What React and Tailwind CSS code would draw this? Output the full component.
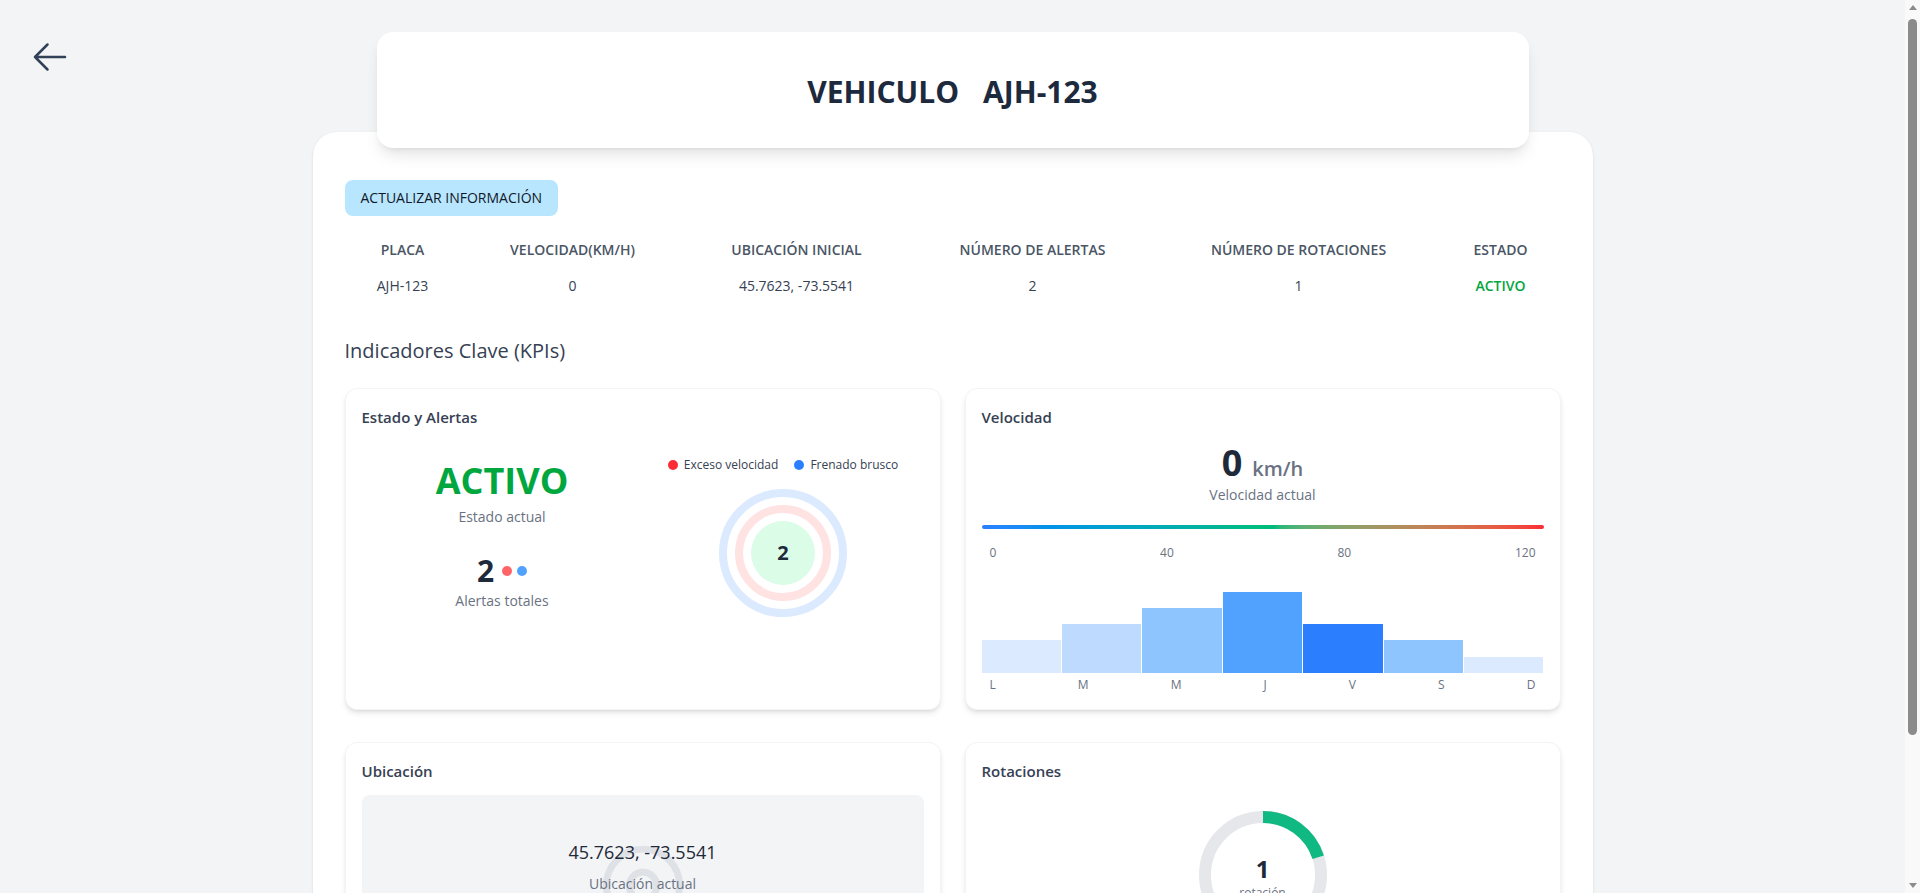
import { MapPin } from "lucide-react";

const columns = [
  { label: "Placa", width: "w-[116px]" },
  { label: "Velocidad(km/h)", width: "w-[224px]" },
  { label: "Ubicación inicial", width: "w-[224px]" },
  { label: "Número de alertas", width: "w-[248px]" },
  { label: "Número de rotaciones", width: "w-[284px]" },
  { label: "Estado", width: "w-[120px]" },
];

const days = [
  { d: "L", h: "h-[33px]", c: "bg-blue-100" },
  { d: "M", h: "h-[49px]", c: "bg-blue-200" },
  { d: "M", h: "h-[65px]", c: "bg-blue-300" },
  { d: "J", h: "h-[81px]", c: "bg-blue-400" },
  { d: "V", h: "h-[49px]", c: "bg-blue-500" },
  { d: "S", h: "h-[33px]", c: "bg-blue-300" },
  { d: "D", h: "h-[16px]", c: "bg-blue-100" },
];

function Card({ title, children }) {
  return (
    <div className="bg-white border border-gray-100 rounded-xl shadow-md p-4">
      <h3 className="text-[15px] leading-6 font-semibold text-gray-700">{title}</h3>
      {children}
    </div>
  );
}

// window scrollbar as it shows in the capture
function ScrollBar() {
  return (
    <div className="fixed right-0 top-0 h-screen w-[15px] bg-[#f9f9f9] flex flex-col items-center">
      <div className="mt-[5px] w-0 h-0 border-x-[4px] border-x-transparent border-b-[5px] border-b-[#8b8b8b]" />
      <div className="mt-[9px] w-[9px] h-[716px] rounded-full bg-[#8b8b8b]" />
      <div className="mt-auto mb-[5px] w-0 h-0 border-x-[4px] border-x-transparent border-t-[5px] border-t-[#8b8b8b]" />
    </div>
  );
}

export default function App() {
  const rotations = 1;
  const maxRotations = 5;
  const r = 58;
  const circ = 2 * Math.PI * r;

  return (
    <div className="min-h-screen bg-gray-100 font-['Open_Sans','Noto_Sans',sans-serif]">
      <div className="relative mr-[15px] pt-8 pb-6">
        {/* back */}
        <button className="absolute left-[30px] top-[37px] w-10 h-10 text-slate-700">
          <svg viewBox="0 0 24 24" fill="none" stroke="currentColor" strokeWidth="1.5" className="w-10 h-10">
            <path strokeLinecap="round" strokeLinejoin="round" d="M10.5 19.5 3 12m0 0 7.5-7.5M3 12h18" />
          </svg>
        </button>

        {/* HEADER */}
        <div className="relative z-10 max-w-6xl mx-auto bg-white rounded-2xl shadow-lg pt-[42px] pb-[38px]">
          <h1 className="flex justify-center gap-6 text-3xl font-bold text-slate-800">
            <span>VEHICULO</span>
            <span>AJH-123</span>
          </h1>
        </div>

        {/* MAIN */}
        <div className="max-w-7xl mx-auto -mt-4 bg-white rounded-3xl shadow-sm px-8 pt-12 pb-8">
          <button className="px-4 py-2 bg-sky-200 rounded-lg text-sm text-gray-900 uppercase">
            Actualizar información
          </button>

          <table className="mt-4 w-full table-fixed">
            <thead>
              <tr>
                {columns.map((c) => (
                  <th
                    key={c.label}
                    className={`${c.width} py-2 text-sm font-semibold uppercase text-gray-600 text-center`}
                  >
                    {c.label}
                  </th>
                ))}
              </tr>
            </thead>
            <tbody>
              <tr className="text-sm text-gray-700 text-center">
                <td className="py-2">AJH-123</td>
                <td className="py-2">0</td>
                <td className="py-2">45.7623, -73.5541</td>
                <td className="py-2">2</td>
                <td className="py-2">1</td>
                <td className="py-2 font-semibold text-green-600">ACTIVO</td>
              </tr>
            </tbody>
          </table>

          <h2 className="mt-[33px] text-xl leading-7 font-medium text-gray-700">Indicadores Clave (KPIs)</h2>

          <div className="mt-[23px] grid grid-cols-2 gap-x-6 gap-y-8">
            {/* ESTADO Y ALERTAS */}
            <Card title="Estado y Alertas">
              <div className="mt-7 grid grid-cols-2">
                <div className="pt-1 flex flex-col items-center">
                  <div className="text-4xl font-bold text-green-600">ACTIVO</div>
                  <div className="mt-1.5 text-sm text-gray-500">Estado actual</div>
                  <div className="mt-[26px] flex items-center gap-2">
                    <span className="text-3xl font-bold text-gray-800">2</span>
                    <span className="flex gap-[5px]">
                      <span className="w-2.5 h-2.5 rounded-full bg-red-400" />
                      <span className="w-2.5 h-2.5 rounded-full bg-blue-400" />
                    </span>
                  </div>
                  <div className="mt-0.5 text-sm text-gray-500">Alertas totales</div>
                </div>

                <div className="flex flex-col items-center">
                  <div className="flex items-center gap-4 text-xs text-gray-700">
                    <span className="flex items-center gap-1.5">
                      <span className="w-2.5 h-2.5 rounded-full bg-red-500" />
                      Exceso velocidad
                    </span>
                    <span className="flex items-center gap-1.5">
                      <span className="w-2.5 h-2.5 rounded-full bg-blue-500" />
                      Frenado brusco
                    </span>
                  </div>
                  <div className="mt-4 w-32 h-32 rounded-full border-8 border-blue-100 flex items-center justify-center">
                    <div className="w-24 h-24 rounded-full border-8 border-red-100 flex items-center justify-center">
                      <div className="w-16 h-16 rounded-full bg-green-100 flex items-center justify-center text-xl font-bold text-gray-800">
                        2
                      </div>
                    </div>
                  </div>
                </div>
              </div>
            </Card>

            {/* VELOCIDAD */}
            <Card title="Velocidad">
              <div className="mt-[14px] flex flex-col items-center">
                <div className="flex items-baseline gap-2.5">
                  <span className="text-4xl font-bold text-gray-800">0</span>
                  <span className="text-xl font-semibold text-gray-500">km/h</span>
                </div>
                <div className="mt-0.5 text-sm text-gray-500">Velocidad actual</div>
              </div>
              <div className="mt-5 h-1 rounded-full bg-gradient-to-r from-blue-500 via-emerald-500 to-red-500" />
              <div className="mt-4 px-2 flex justify-between text-xs text-gray-500">
                <span>0</span>
                <span>40</span>
                <span>80</span>
                <span>120</span>
              </div>
              <div className="mt-4 h-24 flex items-end gap-px">
                {days.map((b, i) => (
                  <div key={i} className={`flex-1 ${b.h} ${b.c}`} />
                ))}
              </div>
              <div className="mt-1 px-2 flex justify-between text-xs text-gray-500">
                {days.map((b, i) => (
                  <span key={i}>{b.d}</span>
                ))}
              </div>
            </Card>

            {/* UBICACION */}
            <Card title="Ubicación">
              <div className="relative mt-3 h-[200px] bg-gray-100 rounded-lg overflow-hidden">
                <div className="absolute inset-0 flex items-center justify-center text-gray-300 opacity-60">
                  <MapPin size={110} strokeWidth={1.5} />
                </div>
                <div className="relative pt-[43px] flex flex-col items-center">
                  <div className="text-lg font-medium text-gray-800">45.7623, -73.5541</div>
                  <div className="mt-2 text-sm text-gray-500">Ubicación actual</div>
                </div>
              </div>
            </Card>

            {/* ROTACIONES */}
            <Card title="Rotaciones">
              <div className="mt-7 flex justify-center">
                <div className="relative w-32 h-32">
                  <svg viewBox="0 0 128 128" className="w-32 h-32 -rotate-90">
                    <circle cx="64" cy="64" r={r} fill="none" stroke="#e5e7eb" strokeWidth="12" />
                    <circle
                      cx="64"
                      cy="64"
                      r={r}
                      fill="none"
                      stroke="#10b981"
                      strokeWidth="12"
                      strokeDasharray={`${(circ * rotations) / maxRotations} ${circ}`}
                    />
                  </svg>
                  <div className="absolute inset-0 pt-1 flex flex-col items-center justify-center">
                    <span className="text-2xl font-bold text-gray-800">1</span>
                    <span className="text-xs text-gray-500">rotación</span>
                  </div>
                </div>
              </div>
            </Card>
          </div>
        </div>
      </div>
      <ScrollBar />
    </div>
  );
}
